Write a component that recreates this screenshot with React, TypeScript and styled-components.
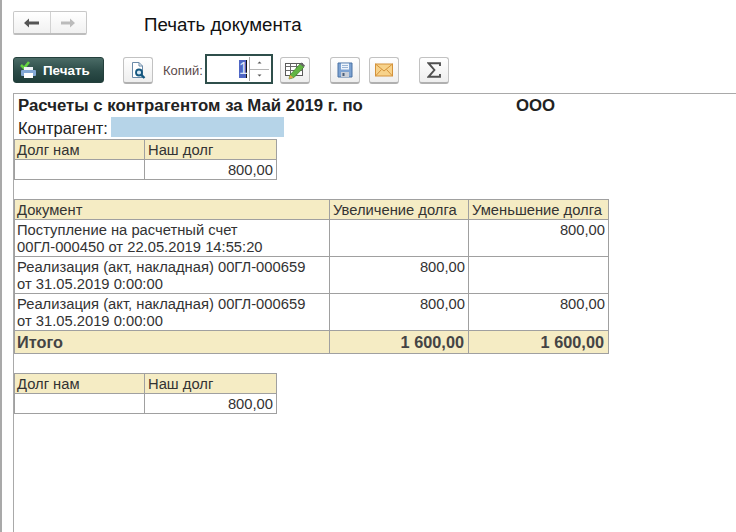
import React from "react";
import styled, { createGlobalStyle } from "styled-components";

const Global = createGlobalStyle`
  html, body { margin: 0; padding: 0; background: #fff; overflow: hidden; }
  body { font-family: "Liberation Sans", Arial, sans-serif; }
`;

const Page = styled.div`
  width: 736px;
  height: 532px;
  box-sizing: border-box;
  border-left: 2px solid #a9a9a9;
  display: flex;
  flex-direction: column;
  overflow: hidden;
`;

const Header = styled.div`
  height: 48px;
  padding: 11px 0 0 11px;
  box-sizing: border-box;
  display: flex;
  align-items: flex-start;
  gap: 57px;
`;

const NavGroup = styled.div`
  width: 74px;
  height: 24px;
  box-sizing: border-box;
  border: 1px solid #c8c8c8;
  border-bottom: 2px solid #bdbdbd;
  border-radius: 2px;
  display: flex;
  background: linear-gradient(#ffffff, #f1f1f1);
`;

const NavButton = styled.div<{ $divider?: boolean }>`
  flex: 1;
  display: flex;
  align-items: center;
  justify-content: center;
  border-right: ${(p) => (p.$divider ? "1px solid #d2d2d2" : "none")};
`;

const Title = styled.div`
  font-size: 18.7px;
  line-height: 22px;
  margin-top: 3px;
  color: #111;
`;

const Toolbar = styled.div`
  height: 45px;
  padding: 8px 0 0 11px;
  box-sizing: border-box;
  display: flex;
  align-items: flex-start;
`;

const PrintButton = styled.div`
  width: 91px;
  height: 26px;
  margin-top: 1px;
  box-sizing: border-box;
  border: 1px solid #24403c;
  border-radius: 3px;
  background: linear-gradient(#4a6b66, #2c4c48 55%, #1f3d3a);
  color: #fff;
  font-size: 13.4px;
  font-weight: bold;
  display: flex;
  align-items: center;
  gap: 7px;
  padding-left: 6px;
`;

const IconButton = styled.div<{ $left: number }>`
  width: 30px;
  height: 27px;
  margin-top: 1px;
  margin-left: ${(p) => p.$left}px;
  box-sizing: border-box;
  border: 1px solid #c2c2c2;
  border-bottom: 2px solid #b0b0b0;
  border-radius: 3px;
  background: linear-gradient(#ffffff, #eeeeee);
  display: flex;
  align-items: center;
  justify-content: center;
  flex: none;
`;

const CopiesLabel = styled.div`
  margin-left: 10px;
  width: 42px;
  font-size: 13px;
  line-height: 14px;
  margin-top: 8px;
  color: #5b4a4a;
`;

const Spinner = styled.div`
  width: 68px;
  height: 30px;
  margin-top: -2px;
  box-sizing: border-box;
  border: 2px solid #2f4f4b;
  display: flex;
  background: #fff;
`;

const SpinnerValue = styled.div`
  width: 42px;
  padding-right: 2px;
  box-sizing: border-box;
  display: flex;
  justify-content: flex-end;
  align-items: center;
  font-size: 16px;
`;

const Selected = styled.span`
  width: 7px;
  background: #4f66c4;
  color: #dfe4f7;
  line-height: 18px;
  text-align: center;
  border-right: 1px solid #111;
`;

const SpinnerArrows = styled.div`
  flex: 1;
  border-left: 1px solid #a8a8a8;
  display: flex;
  flex-direction: column;
  height: 24px;
  margin: 1px 2px 0 0;
`;

const SpinnerArrow = styled.div<{ $bottom?: boolean }>`
  flex: 1;
  display: flex;
  align-items: center;
  justify-content: center;
  border-top: ${(p) => (p.$bottom ? "1px solid #b5b5b5" : "none")};
`;

const Doc = styled.div`
  flex: 1;
  margin-left: 11px;
  border-top: 1px solid #a9a9a9;
  border-left: 1px solid #a9a9a9;
  display: flex;
  flex-direction: column;
  color: #2d2d2d;
`;

const ReportTitle = styled.div`
  height: 23px;
  display: flex;
  align-items: center;
  font-size: 16.8px;
  font-weight: bold;
  color: #222;
  padding-left: 4px;
`;

const ReportTitleText = styled.div`
  width: 498px;
`;

const CounterpartyRow = styled.div`
  display: flex;
  height: 22px;
  padding-left: 4px;
  font-size: 16.5px;
  line-height: 22px;
  color: #222;
`;

const Highlight = styled.div`
  width: 173px;
  height: 20px;
  margin-left: 3px;
  background: #b6d4e8;
`;

const Table = styled.table<{ $width: number; $gap: number }>`
  width: ${(p) => p.$width}px;
  margin-bottom: ${(p) => p.$gap}px;
  border-collapse: collapse;
  table-layout: fixed;
  font-size: 14.75px;
  line-height: 17px;
  color: #333;
`;

const Cell = styled.td<{ $w?: number; $h?: boolean; $right?: boolean; $bold?: boolean; $rowH?: number }>`
  border: 1px solid #a0a0a0;
  padding: ${(p) => (p.$bold ? "0" : p.$rowH === 37 ? "2px" : "1px")} ${(p) => (p.$bold ? "4px" : "3px")} 0 3px;
  box-sizing: border-box;
  height: ${(p) => p.$rowH ?? 20}px;
  ${(p) => (p.$w ? `width: ${p.$w}px;` : "")}
  background: ${(p) => (p.$h ? "#f5ecc4" : "#fff")};
  text-align: ${(p) => (p.$right ? "right" : "left")};
  font-weight: ${(p) => (p.$bold ? "bold" : "normal")};
  vertical-align: ${(p) => (p.$rowH === 37 ? "top" : "middle")};
  white-space: nowrap;
  ${(p) => (p.$bold ? "font-size: 16.3px; color: #444;" : "")}
  &:first-child { padding-left: 2px; }
`;

const Arrow = ({ color }: { color: string }) => (
  <svg width="16" height="10" viewBox="0 0 16 10">
    <path d="M0 5 L5 0.5 V3.5 H15 V6.5 H5 V9.5 Z" fill={color} />
  </svg>
);

const ArrowRight = ({ color }: { color: string }) => (
  <svg width="16" height="10" viewBox="0 0 16 10">
    <path d="M15 5 L10 0.5 V3.5 H1 V6.5 H10 V9.5 Z" fill={color} />
  </svg>
);

const PrinterIcon = () => (
  <svg width="16" height="20" viewBox="0 0 16 20">
    <path d="M1 5 L4 8 L9 2" fill="none" stroke="#63d33f" strokeWidth="2.6" />
    <rect x="4" y="7" width="9" height="3" fill="#eef2f7" />
    <rect x="1" y="10" width="15" height="6" rx="1" fill="#84a9d6" />
    <rect x="4" y="13" width="9" height="5" fill="#fff" />
  </svg>
);

const PreviewIcon = () => (
  <svg width="18" height="20" viewBox="0 0 18 20">
    <path d="M3.5 2.5 H10 L13.5 6 V17.5 H3.5 Z" fill="#fff" stroke="#6b8aa8" />
    <path d="M10 2.5 V6 H13.5" fill="none" stroke="#6b8aa8" />
    <circle cx="10" cy="12.5" r="3" fill="#d6e8f5" stroke="#14577f" strokeWidth="1.8" />
    <path d="M12.2 14.8 L15.5 18" stroke="#14577f" strokeWidth="2.4" />
  </svg>
);

const TableEditIcon = () => (
  <svg width="22" height="20" viewBox="0 0 22 20">
    <rect x="1.5" y="3.5" width="17" height="12" fill="#fff" stroke="#5a5a5a" />
    <path d="M1.5 6.5 H18.5 M1.5 10.5 H18.5 M6.5 3.5 V15.5 M12.5 3.5 V15.5" stroke="#6a6a6a" />
    <path d="M6 15 L16 4 L20 7 L10 17.5 L5 19 Z" fill="#62b544" stroke="#3f7f2a" strokeWidth="0.7" />
    <path d="M16 4 L20 7 L21 5.5 L17.5 2.5 Z" fill="#666" />
    <path d="M5 19 L6 15 L9.5 17.5 Z" fill="#e2a748" />
  </svg>
);

const SaveIcon = () => (
  <svg width="16" height="16" viewBox="0 0 16 16">
    <path d="M1 1 H15 V15 H1 Z" fill="#7ca2d2" stroke="#4a72a4" />
    <rect x="4" y="1.5" width="8" height="6" fill="#eef4fb" />
    <path d="M5 3.5 H11 M5 5.5 H11" stroke="#9ab4d4" />
    <rect x="4" y="10" width="8" height="5" fill="#c9cfd8" />
    <rect x="5.5" y="11" width="2" height="3" fill="#4a5f7a" />
  </svg>
);

const MailIcon = () => (
  <svg width="20" height="16" viewBox="0 0 20 16">
    <rect x="1.5" y="2" width="17" height="12" fill="#f7d28a" stroke="#d4923a" />
    <path d="M1.5 2 L10 9 L18.5 2 M1.5 14 L7.5 7.5 M18.5 14 L12.5 7.5" fill="none" stroke="#d4923a" />
  </svg>
);

const SigmaIcon = () => (
  <svg width="14" height="16" viewBox="0 0 14 16">
    <path d="M13 4 V1.2 H1.5 L7.4 8 L1.5 14.8 H13 V12" fill="none" stroke="#505050" strokeWidth="1.9" />
  </svg>
);

const App: React.FC = () => (
  <>
    <Global />
    <Page>
      <Header>
        <NavGroup>
          <NavButton $divider>
            <Arrow color="#555" />
          </NavButton>
          <NavButton>
            <ArrowRight color="#bbb" />
          </NavButton>
        </NavGroup>
        <Title>Печать документа</Title>
      </Header>
      <Toolbar>
        <PrintButton>
          <PrinterIcon />
          Печать
        </PrintButton>
        <IconButton $left={19}>
          <PreviewIcon />
        </IconButton>
        <CopiesLabel>Копий:</CopiesLabel>
        <Spinner>
          <SpinnerValue>
            <Selected>1</Selected>
          </SpinnerValue>
          <SpinnerArrows>
            <SpinnerArrow>
              <svg width="5" height="3" viewBox="0 0 5 3"><path d="M2.5 0.5 L4.5 2.5 H0.5 Z" fill="#555" /></svg>
            </SpinnerArrow>
            <SpinnerArrow $bottom>
              <svg width="5" height="3" viewBox="0 0 5 3"><path d="M2.5 2.5 L4.5 0.5 H0.5 Z" fill="#555" /></svg>
            </SpinnerArrow>
          </SpinnerArrows>
        </Spinner>
        <IconButton $left={7}>
          <TableEditIcon />
        </IconButton>
        <IconButton $left={20}>
          <SaveIcon />
        </IconButton>
        <IconButton $left={9}>
          <MailIcon />
        </IconButton>
        <IconButton $left={20}>
          <SigmaIcon />
        </IconButton>
      </Toolbar>
      <Doc>
        <ReportTitle>
          <ReportTitleText>Расчеты с контрагентом за Май 2019 г. по</ReportTitleText>
          ООО
        </ReportTitle>
        <CounterpartyRow>
          Контрагент:
          <Highlight />
        </CounterpartyRow>
        <Table $width={263} $gap={19}>
          <tbody>
            <tr>
              <Cell $h $w={130}>Долг нам</Cell>
              <Cell $h>Наш долг</Cell>
            </tr>
            <tr>
              <Cell />
              <Cell $right>800,00</Cell>
            </tr>
          </tbody>
        </Table>
        <Table $width={595} $gap={19}>
          <tbody>
            <tr>
              <Cell $h $w={315}>Документ</Cell>
              <Cell $h $w={139}>Увеличение долга</Cell>
              <Cell $h>Уменьшение долга</Cell>
            </tr>
            <tr>
              <Cell $rowH={37}>
                Поступление на расчетный счет
                <br />
                00ГЛ-000450 от 22.05.2019 14:55:20
              </Cell>
              <Cell $rowH={37} />
              <Cell $rowH={37} $right>800,00</Cell>
            </tr>
            <tr>
              <Cell $rowH={37}>
                Реализация (акт, накладная) 00ГЛ-000659
                <br />
                от 31.05.2019 0:00:00
              </Cell>
              <Cell $rowH={37} $right>800,00</Cell>
              <Cell $rowH={37} />
            </tr>
            <tr>
              <Cell $rowH={37}>
                Реализация (акт, накладная) 00ГЛ-000659
                <br />
                от 31.05.2019 0:00:00
              </Cell>
              <Cell $rowH={37} $right>800,00</Cell>
              <Cell $rowH={37} $right>800,00</Cell>
            </tr>
            <tr>
              <Cell $h $bold $rowH={23}>Итого</Cell>
              <Cell $h $bold $right $rowH={23}>1 600,00</Cell>
              <Cell $h $bold $right $rowH={23}>1 600,00</Cell>
            </tr>
          </tbody>
        </Table>
        <Table $width={263} $gap={0}>
          <tbody>
            <tr>
              <Cell $h $w={130}>Долг нам</Cell>
              <Cell $h>Наш долг</Cell>
            </tr>
            <tr>
              <Cell />
              <Cell $right>800,00</Cell>
            </tr>
          </tbody>
        </Table>
      </Doc>
    </Page>
  </>
);

export default App;
